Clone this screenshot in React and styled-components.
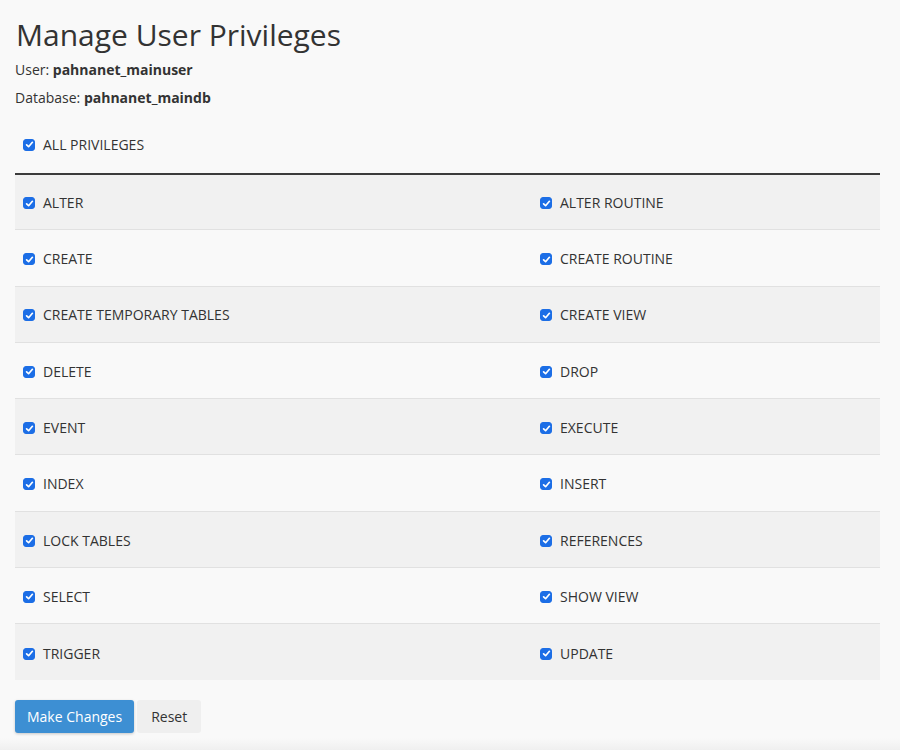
import React, { useState } from 'react'
import styled, { createGlobalStyle } from 'styled-components'

const PRIVILEGES = [
   ['ALTER', 'ALTER ROUTINE'],
   ['CREATE', 'CREATE ROUTINE'],
   ['CREATE TEMPORARY TABLES', 'CREATE VIEW'],
   ['DELETE', 'DROP'],
   ['EVENT', 'EXECUTE'],
   ['INDEX', 'INSERT'],
   ['LOCK TABLES', 'REFERENCES'],
   ['SELECT', 'SHOW VIEW'],
   ['TRIGGER', 'UPDATE']
]

const Check = ({ checked, onToggle, children }) => (
   <CheckLabel onClick={onToggle}>
      <Box $checked={checked}>
         {checked && (
            <svg width="9" height="9" viewBox="0 0 9 9">
               <path d="M1.6 4.8 L3.6 6.7 L7.4 2.3" fill="none" stroke="#fff" strokeWidth="1.7" strokeLinecap="round" strokeLinejoin="round" />
            </svg>
         )}
      </Box>
      {children}
   </CheckLabel>
)

export default function App() {
   const all = PRIVILEGES.flat()
   const [checked, setChecked] = useState(() => Object.fromEntries(all.map(p => [p, true])))
   const allOn = all.every(p => checked[p])

   const toggle = p => setChecked(s => ({ ...s, [p]: !s[p] }))
   const toggleAll = () => setChecked(Object.fromEntries(all.map(p => [p, !allOn])))

   return (
      <Page>
         <GlobalStyle />
         <Title>Manage User Privileges</Title>
         <Meta>
            User: <b>pahnanet_mainuser</b>
         </Meta>
         <Meta>
            Database: <b>pahnanet_maindb</b>
         </Meta>
         <AllRow>
            <Check checked={allOn} onToggle={toggleAll}>
               ALL PRIVILEGES
            </Check>
         </AllRow>
         <Table>
            <tbody>
               {PRIVILEGES.map(([left, right], i) => (
                  <Row key={left} $striped={i % 2 === 0} $first={i === 0}>
                     <Cell $wide>
                        <Check checked={checked[left]} onToggle={() => toggle(left)}>
                           {left}
                        </Check>
                     </Cell>
                     <Cell>
                        <Check checked={checked[right]} onToggle={() => toggle(right)}>
                           {right}
                        </Check>
                     </Cell>
                  </Row>
               ))}
            </tbody>
         </Table>
         <Actions>
            <PrimaryButton>Make Changes</PrimaryButton>
            <ResetButton>Reset</ResetButton>
         </Actions>
      </Page>
   )
}

const GlobalStyle = createGlobalStyle`
   html, body {
      margin: 0;
      background: #f9f9f9;
      font-family: "Open Sans", "Liberation Sans", sans-serif;
      color: #333;
   }
   body {
      min-height: 750px;
      background: linear-gradient(to bottom, #f9f9f9 738px, #efefef 750px);
   }
`

const Page = styled.div`
   padding: 14px 20px 16px 15px;
`

const Title = styled.h1`
   margin: 0 0 4px 1px;
   font-size: 30px;
   font-weight: 400;
   line-height: 42px;
   color: #333;
`

const Meta = styled.div`
   font-size: 14px;
   line-height: 20px;
   margin-bottom: 8px;

   b {
      font-weight: 700;
   }
`

const AllRow = styled.div`
   padding: 16px 8px 18px;
`

const CheckLabel = styled.label`
   display: inline-flex;
   align-items: center;
   gap: 8px;
   font-size: 14px;
   line-height: 20px;
   color: #333;
   cursor: pointer;
   user-select: none;
`

const Box = styled.span`
   width: 12px;
   height: 12px;
   border-radius: 3px;
   box-sizing: border-box;
   display: inline-flex;
   align-items: center;
   justify-content: center;
   background: ${p => (p.$checked ? '#1c6ee6' : '#fff')};
   border: 1px solid ${p => (p.$checked ? '#1c6ee6' : '#767676')};
`

const Table = styled.table`
   width: 100%;
   border-collapse: collapse;
   border-top: 2px solid #3b3b3b;
`

const Row = styled.tr`
   height: 56.3px;
   background: ${p => (p.$striped ? '#f1f1f1' : '#f9f9f9')};
   border-top: ${p => (p.$first ? 'none' : '1px solid #e1e1e1')};
`

const Cell = styled.td`
   padding: 0 8px;
   vertical-align: middle;
   width: ${p => (p.$wide ? '501px' : 'auto')};
`

const Actions = styled.div`
   display: flex;
   gap: 3px;
   margin-top: 20px;
`

const PrimaryButton = styled.button`
   height: 33px;
   padding: 0 12px;
   border: none;
   border-radius: 3px;
   background: #3d8fd3;
   color: #fff;
   font-family: inherit;
   font-size: 14px;
   box-shadow: 0 1px 3px rgba(0, 0, 0, 0.2);
   cursor: pointer;
`

const ResetButton = styled.button`
   height: 33px;
   padding: 0 14px;
   border: none;
   border-radius: 3px;
   background: #efefef;
   color: #333;
   font-family: inherit;
   font-size: 14px;
   cursor: pointer;
`
